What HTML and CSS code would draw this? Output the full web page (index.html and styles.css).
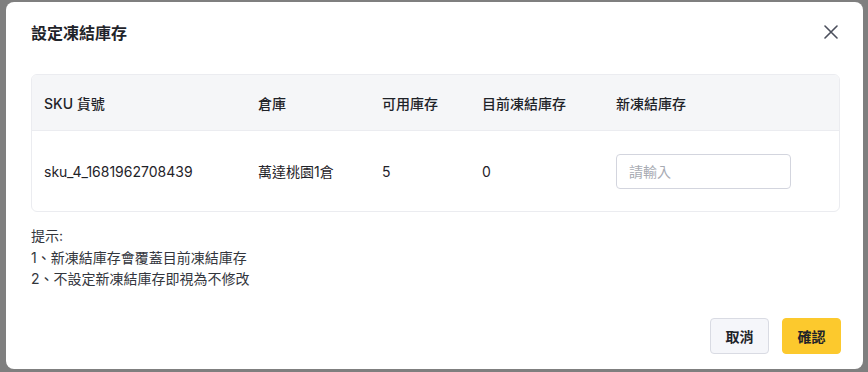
FILE: index.html
```html
<!DOCTYPE html>
<html>
<head>
    <title>設定凍結庫存</title>
    <link rel="stylesheet" href="styles.css">
</head>
<body>
    <div class="modal">
        <div class="modal-header">
            <h2>設定凍結庫存</h2>
            <button class="close" aria-label="close">
                <svg width="14" height="14" viewBox="0 0 14 14"><path d="M1 1L13 13M13 1L1 13" stroke="#4b4f5c" stroke-width="1.6" stroke-linecap="round"/></svg>
            </button>
        </div>

        <div class="table-box">
            <table>
                <colgroup>
                    <col style="width:214px">
                    <col style="width:124px">
                    <col style="width:100px">
                    <col style="width:134px">
                    <col>
                </colgroup>
                <thead>
                    <tr>
                        <th>SKU 貨號</th>
                        <th>倉庫</th>
                        <th>可用庫存</th>
                        <th>目前凍結庫存</th>
                        <th>新凍結庫存</th>
                    </tr>
                </thead>
                <tbody>
                    <tr>
                        <td>sku_4_1681962708439</td>
                        <td>萬達桃園1倉</td>
                        <td>5</td>
                        <td>0</td>
                        <td><input type="text" placeholder="請輸入"></td>
                    </tr>
                </tbody>
            </table>
        </div>

        <div class="tips">
            <p>提示:</p>
            <p>1、新凍結庫存會覆蓋目前凍結庫存</p>
            <p>2、不設定新凍結庫存即視為不修改</p>
        </div>

        <div class="modal-footer">
            <button class="btn">取消</button>
            <button class="btn btn-primary">確認</button>
        </div>
    </div>
</body>
</html>
```

FILE: styles.css
```css
body {
    margin: 0;
    background-color: #7f7f7f;
    font-family: Inter, "Noto Sans CJK TC", sans-serif;
    color: #1f2329;
    height: 372px;
    overflow: hidden;
}

.modal {
    background-color: white;
    margin: 2px 0 0 6px;
    width: 857px;
    height: 367px;
    border-radius: 8px;
    box-sizing: border-box;
    padding: 0 22px 0 25px;
    display: flex;
    flex-direction: column;
}

.modal-header {
    display: flex;
    align-items: center;
    justify-content: space-between;
    height: 60px;
}

.modal-header h2 {
    margin: 0;
    font-size: 16px;
    font-weight: 600;
    color: #1f2329;
}

.close {
    background: none;
    border: none;
    padding: 0;
    margin-right: 2px;
    width: 16px;
    height: 16px;
    display: flex;
    align-items: center;
    justify-content: center;
    cursor: pointer;
}

.table-box {
    margin-top: 12px;
    margin-right: 1px;
    border: 1px solid #ebecf0;
    border-radius: 6px;
    overflow: hidden;
}

table {
    width: 100%;
    border-collapse: collapse;
    table-layout: fixed;
    font-size: 14px;
}

th {
    background-color: #f5f6f8;
    height: 55px;
    padding: 0 12px;
    text-align: left;
    font-weight: 500;
    border-bottom: 1px solid #ebecf0;
}

td {
    height: 80px;
    padding: 0 12px;
    color: #1f2329;
}

input[type=text] {
    width: 175px;
    height: 35px;
    box-sizing: border-box;
    border: 1px solid #d3d5de;
    border-radius: 4px;
    padding: 0 12px;
    font-family: inherit;
    font-size: 14px;
    outline: none;
}

input::placeholder {
    color: #a8abb3;
}

.tips {
    margin-top: 13px;
    font-size: 14px;
    color: #33363d;
}

.tips p {
    margin: 0;
    line-height: 21.5px;
}

.modal-footer {
    margin-top: auto;
    margin-bottom: 15px;
    display: flex;
    justify-content: flex-end;
    gap: 13px;
}

.btn {
    height: 36px;
    width: 59px;
    border: 1px solid #d9dbe3;
    border-radius: 4px;
    background-color: #f5f6fa;
    font-family: inherit;
    font-size: 14px;
    font-weight: 600;
    color: #1f2329;
    cursor: pointer;
}

.btn-primary {
    background-color: #fcc92d;
    border-color: #fcc92d;
}
```
